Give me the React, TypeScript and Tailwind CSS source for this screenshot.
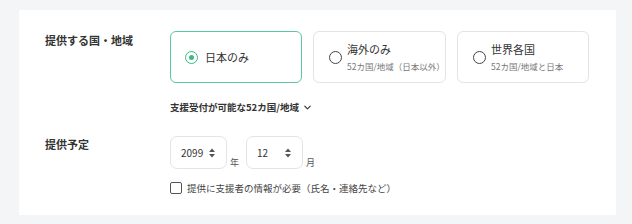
import { ChevronDown } from "lucide-react";

const font = { fontFamily: '"Noto Sans CJK JP", "Noto Sans", sans-serif' };

const Radio = ({ checked }: { checked: boolean }) => (
  <span
    className={`flex h-[13px] w-[13px] shrink-0 items-center justify-center rounded-full border-[1.5px] ${
      checked ? "border-[#3fb984]" : "border-[#444]"
    }`}
  >
    {checked && <span className="h-[5px] w-[5px] rounded-full bg-[#3fb984]" />}
  </span>
);

const SortIcon = () => (
  <svg width="6" height="10" viewBox="0 0 6 10" className="shrink-0 text-[#555]">
    <path d="M3 0.5 L6 4 H0 Z" fill="currentColor" />
    <path d="M3 9.5 L6 6 H0 Z" fill="currentColor" />
  </svg>
);

export default function App() {
  return (
    <div className="min-h-[224px] w-[632px] bg-[#f4f5f7] pl-[19px] pr-[16px] pt-[10px]" style={font}>
      <div className="h-[205px] bg-white pl-[26px] pt-[22px]">
        {/* 提供する国・地域 */}
        <div className="flex">
          <div className="w-[125px] shrink-0 text-[11px] font-bold text-[#333]">提供する国・地域</div>
          <div>
            <div className="flex gap-[11px]">
              <div className="-mt-[1px] flex h-[52px] w-[132px] items-center gap-[7px] rounded-[6px] border border-[#5cc79a] pl-[14px]">
                <Radio checked />
                <span className="text-[11px] text-[#333]">日本のみ</span>
              </div>
              <div className="-mt-[1px] flex h-[52px] w-[133px] items-center gap-[5px] rounded-[6px] border border-[#e2e4e8] pl-[15px]">
                <Radio checked={false} />
                <div className="flex flex-col leading-tight">
                  <span className="text-[11px] text-[#333]">海外のみ</span>
                  <span className="mt-[4px] text-[8.5px] text-[#777]">52カ国/地域（日本以外）</span>
                </div>
              </div>
              <div className="-mt-[1px] flex h-[52px] w-[132px] items-center gap-[5px] rounded-[6px] border border-[#e2e4e8] pl-[15px]">
                <Radio checked={false} />
                <div className="flex flex-col leading-tight">
                  <span className="text-[11px] text-[#333]">世界各国</span>
                  <span className="mt-[4px] text-[8.5px] text-[#777]">52カ国/地域と日本</span>
                </div>
              </div>
            </div>
            <div className="mt-[17px] flex items-center gap-[3px] text-[9.5px] font-bold text-[#333]">
              支援受付が可能な52カ国/地域
              <ChevronDown className="h-[11px] w-[11px]" strokeWidth={2.5} />
            </div>
          </div>
        </div>

        {/* 提供予定 */}
        <div className="mt-[22px] flex">
          <div className="w-[125px] shrink-0 text-[11px] font-bold text-[#333]">提供予定</div>
          <div>
            <div className="flex items-end">
              <div className="flex h-[33px] w-[57px] shrink-0 items-center justify-between rounded-[7px] border border-[#e2e4e8] bg-white pl-[10px] pr-[11px] text-[10px] text-[#333]">
                <span>2099</span>
                <SortIcon />
              </div>
              <span className="ml-[3px] mr-[7px] text-[9px] text-[#555]">年</span>
              <div className="flex h-[33px] w-[57px] shrink-0 items-center justify-between rounded-[7px] border border-[#e2e4e8] bg-white pl-[10px] pr-[11px] text-[10px] text-[#333]">
                <span>12</span>
                <SortIcon />
              </div>
              <span className="ml-[3px] text-[9px] text-[#555]">月</span>
            </div>
            <label className="mt-[12px] flex items-center gap-[5px] text-[9.5px] text-[#444]">
              <span className="h-[12px] w-[12px] shrink-0 rounded-[2px] border border-[#555] bg-white" />
              提供に支援者の情報が必要（氏名・連絡先など）
            </label>
          </div>
        </div>
      </div>
    </div>
  );
}
